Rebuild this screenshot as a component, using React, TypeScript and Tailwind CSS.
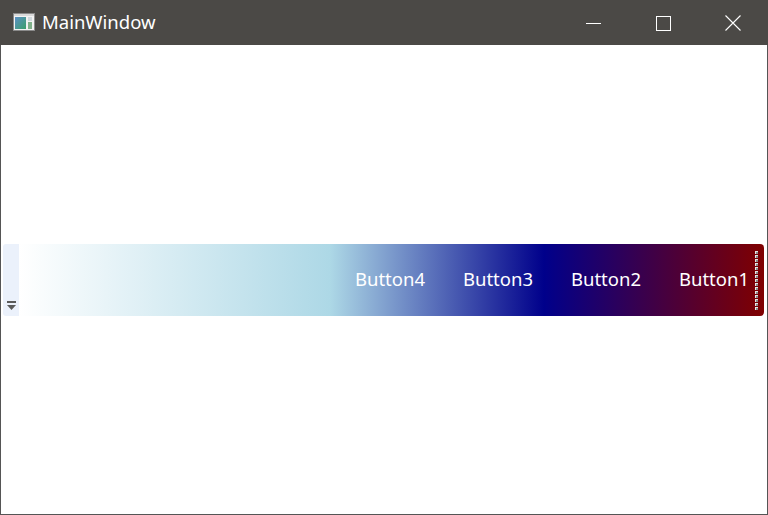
function AppIcon() {
    return (
        <svg width="22" height="18" viewBox="0 0 22 18">
            <rect x="0.5" y="0.5" width="21" height="17" fill="#f2f2f2" stroke="#8a8a8a"/>
            <rect x="1" y="1" width="20" height="2" fill="#d9d9d9"/>
            <defs>
                <linearGradient id="pane" x1="0" y1="0" x2="1" y2="1">
                    <stop offset="0" stopColor="#5b8fc7"/>
                    <stop offset="1" stopColor="#3aa06a"/>
                </linearGradient>
            </defs>
            <rect x="2" y="4" width="11" height="12" fill="url(#pane)"/>
            <rect x="15" y="4" width="4" height="4" fill="#cfd8dc"/>
            <rect x="15" y="9" width="4" height="7" fill="#7fb08a"/>
        </svg>
    )
}

function Grip() {
    return (
        <div className="flex flex-col gap-[1px] py-[6px] pl-[6px] pr-[6px]">
            {Array.from({length: 15}).map((_, i) => (
                <div key={i} className="w-[3px] h-[3px] bg-[#8c8c8c] border-t border-l border-[#e6e6e6]"></div>
            ))}
        </div>
    )
}

function App() {
    const buttons = ['Button4', 'Button3', 'Button2', 'Button1'];
    return (
        <div className="w-[768px] h-[515px] flex flex-col bg-white" style={{fontFamily: '"Noto Sans", "Liberation Sans", sans-serif'}}>
            <div className="h-[45px] bg-[#4b4946] flex items-center text-white">
                <div className="pl-[13px] pr-[7px] flex items-center pb-[1px]"><AppIcon/></div>
                <span className="text-[18.5px] pb-[2px]">MainWindow</span>
                <div className="ml-auto flex h-full">
                    <div className="w-[70px] flex items-center justify-center">
                        <div className="w-[15px] h-[1px] bg-white mt-[1px]"></div>
                    </div>
                    <div className="w-[70px] flex items-center justify-center">
                        <div className="w-[15px] h-[15px] border border-white mt-[1px]"></div>
                    </div>
                    <div className="w-[70px] flex items-center justify-center pr-[1px]">
                        <svg width="16" height="16" viewBox="0 0 16 16">
                            <path d="M0.5 0.5 L15.5 15.5 M15.5 0.5 L0.5 15.5" stroke="white" strokeWidth="1.1"/>
                        </svg>
                    </div>
                </div>
            </div>
            <div className="flex-1 flex flex-col justify-center border-x border-b border-[#555555]">
                <div className="ml-[2px] mr-[3px] h-[72px] flex mt-[1px]">
                    <div className="w-[16px] rounded-l-[3px] bg-[#ebf1fb] flex flex-col justify-end items-center pb-[6px]">
                        <div className="w-[9px] h-[2px] bg-[#5a5a5a] mb-[2px]"></div>
                        <svg width="9" height="5" viewBox="0 0 9 5">
                            <path d="M0 0 L9 0 L4.5 5 Z" fill="#5a5a5a"/>
                        </svg>
                    </div>
                    <div className="flex-1 flex items-center justify-end rounded-r-[4px] bg-[linear-gradient(to_right,#ffffff_0px,#add8e6_311px,#00008b_525px,#800000_745px)]">
                        {buttons.map((b) => (
                            <div key={b} className="w-[108px] text-right text-white text-[18.5px] pb-[2px]">{b}</div>
                        ))}
                        <Grip/>
                    </div>
                </div>
            </div>
        </div>
    )
}

export default App;
